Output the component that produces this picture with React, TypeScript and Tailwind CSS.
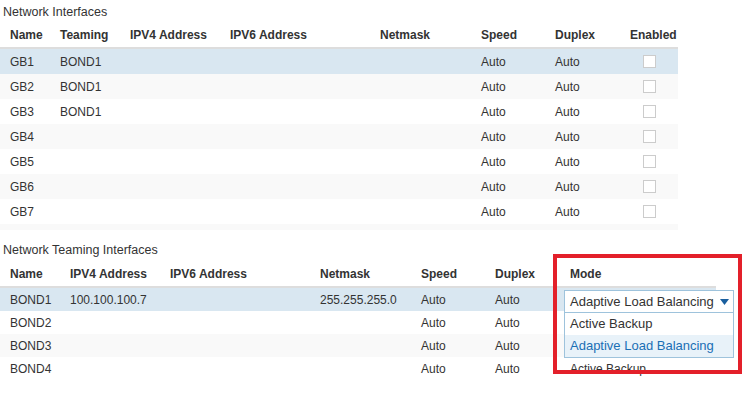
import React from "react";

const top = [
  ["GB1", "BOND1"], ["GB2", "BOND1"], ["GB3", "BOND1"], ["GB4", ""], ["GB5", ""], ["GB6", ""], ["GB7", ""], ["GB8", ""],
];
const bonds = [
  ["BOND1", "100.100.100.7", "255.255.255.0"], ["BOND2", "", ""], ["BOND3", "", ""], ["BOND4", "", ""],
];

export default function App() {
  return (
    <div className="w-[750px] h-[408px] bg-white text-[#333] text-[12px] overflow-hidden relative" style={{ fontFamily: '"Liberation Sans", Arial, sans-serif' }}>
      <div className="pl-[3px] pt-[3px] h-[22px] text-[12.5px]">Network Interfaces</div>
      <div className="w-[678px] h-[208px] overflow-hidden">
        <div className="flex h-[27px] items-center font-bold border-b-2 border-[#ddd] pt-[1px]">
          <div className="w-[60px] pl-[10px]">Name</div>
          <div className="w-[70px]">Teaming</div>
          <div className="w-[100px]">IPV4 Address</div>
          <div className="w-[150px]">IPV6 Address</div>
          <div className="w-[101px]">Netmask</div>
          <div className="w-[74px]">Speed</div>
          <div className="w-[75px]">Duplex</div>
          <div>Enabled</div>
        </div>
        {top.map((r, i) => (
          <div key={i} className={`flex h-[25px] items-center ${i === 0 ? "bg-[#d9e7f1]" : i % 2 === 1 ? "bg-[#f9f9f9]" : "bg-white"}`}>
            <div className="w-[60px] pl-[10px]">{r[0]}</div>
            <div className="w-[421px]">{r[1]}</div>
            <div className="w-[74px]">Auto</div>
            <div className="w-[88px]">Auto</div>
            <div className="w-[13px] h-[13px] border border-[#ccc] bg-white" />
          </div>
        ))}
      </div>
      <div className="pl-[3px] pt-[11px] h-[32px] text-[12.5px]">Network Teaming Interfaces</div>
      <div className="w-[716px]">
        <div className="flex h-[26px] items-center font-bold border-b-2 border-[#ddd]">
          <div className="w-[70px] pl-[10px]">Name</div>
          <div className="w-[100px]">IPV4 Address</div>
          <div className="w-[150px]">IPV6 Address</div>
          <div className="w-[101px]">Netmask</div>
          <div className="w-[74px]">Speed</div>
          <div className="w-[75px]">Duplex</div>
          <div>Mode</div>
        </div>
        {bonds.map((r, i) => (
          <div key={i} className={`flex h-[23px] items-center ${i === 0 ? "bg-[#d9e7f1]" : i % 2 === 1 ? "bg-white" : "bg-[#f9f9f9]"}`}>
            <div className="w-[70px] pl-[10px]">{r[0]}</div>
            <div className="w-[250px]">{r[1]}</div>
            <div className="w-[101px]">{r[2]}</div>
            <div className="w-[74px]">Auto</div>
            <div className="w-[75px]">Auto</div>
            <div>{i === 3 ? "Active Backup" : ""}</div>
          </div>
        ))}
      </div>
      <div className="absolute left-[564px] top-[290px] w-[170px] text-[13px]">
        <div className="h-[23px] border border-[#9ec3dc] bg-white flex items-center justify-between pl-[5px] pr-[4px]">
          <span>Adaptive Load Balancing</span>
          <svg width="9" height="6" viewBox="0 0 9 6"><path d="M0 0h9L4.5 6z" fill="#1a5f9e" /></svg>
        </div>
        <div className="border border-t-0 border-[#9ec3dc] bg-white">
          <div className="h-[22px] flex items-center pl-[5px]">Active Backup</div>
          <div className="h-[22px] flex items-center pl-[5px] bg-[#e8f2f9] text-[#1a6fb5]">Adaptive Load Balancing</div>
        </div>
      </div>
      <div className="absolute left-[553px] top-[254px] w-[189px] h-[120px] border-[4px] border-[#e3202a]" />
    </div>
  );
}
